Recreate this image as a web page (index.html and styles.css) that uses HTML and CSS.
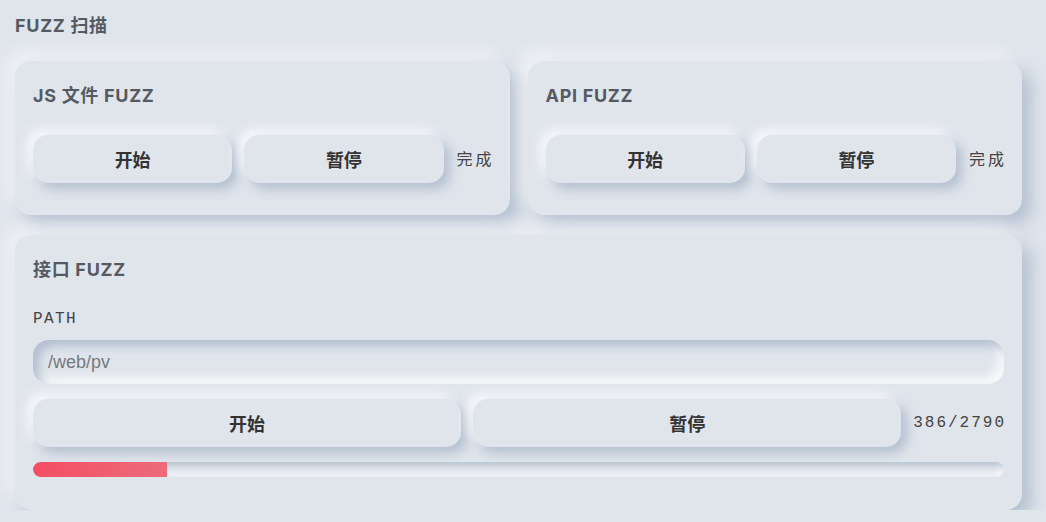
FILE: index.html
```html
<!DOCTYPE html>
<html lang="zh">
<head>
<meta charset="utf-8">
<title>FUZZ 扫描</title>
<link rel="stylesheet" href="styles.css">
</head>
<body>
<div class="page">
  <h2 class="page-title">FUZZ 扫描</h2>
  <div class="grid">
    <section class="card">
      <h3 class="card-title">JS 文件 FUZZ</h3>
      <div class="row">
        <button class="btn">开始</button>
        <button class="btn">暂停</button>
        <span class="status">完成</span>
      </div>
    </section>
    <section class="card">
      <h3 class="card-title">API FUZZ</h3>
      <div class="row">
        <button class="btn">开始</button>
        <button class="btn">暂停</button>
        <span class="status">完成</span>
      </div>
    </section>
    <section class="card wide">
      <h3 class="card-title">接口 FUZZ</h3>
      <label class="label">PATH</label>
      <input class="input" type="text" placeholder="/web/pv">
      <div class="row">
        <button class="btn">开始</button>
        <button class="btn">暂停</button>
        <span class="count">386/2790</span>
      </div>
      <div class="track"><div class="fill" style="width:13.8%"></div></div>
    </section>
  </div>
</div>
</body>
</html>
```

FILE: styles.css
```css
html, body {
  margin: 0;
  padding: 0;
  background: #e0e5ec;
}
body {
  font-family: Inter, "Noto Sans CJK SC", sans-serif;
  color: #333;
}
.page {
  padding: 15px 24px 0 15px;
}
.page-title {
  margin: 0 0 24px 0;
  font-size: 18px;
  line-height: 22px;
  font-weight: 700;
  color: #555a62;
  letter-spacing: 0.7px;
}
.grid {
  display: grid;
  grid-template-columns: 1fr 1fr;
  column-gap: 18px;
  row-gap: 20px;
}
.card {
  background: #e0e5ec;
  border-radius: 16px;
  padding: 24px 18px 32px 18px;
  display: flex;
  flex-direction: column;
  box-shadow: 9px 9px 18px rgba(163, 177, 198, 0.75), -9px -9px 18px rgba(255, 255, 255, 0.55);
}
.wide {
  grid-column: 1 / span 2;
  padding-bottom: 33px;
}
.card-title {
  margin: 0 0 28px 0;
  font-size: 18px;
  line-height: 22px;
  font-weight: 700;
  color: #555a62;
  letter-spacing: 0.7px;
}
.row {
  display: flex;
  align-items: center;
  gap: 12px;
}
.btn {
  flex: 1;
  height: 48px;
  border: none;
  border-radius: 15px;
  background: #e0e5ec;
  font-family: Inter, "Noto Sans CJK SC", sans-serif;
  font-size: 18px;
  font-weight: 700;
  color: #333;
  box-shadow: 6px 6px 12px rgba(163, 177, 198, 0.75), -6px -6px 12px rgba(255, 255, 255, 0.75);
  padding: 0;
}
.status {
  font-family: "Liberation Mono", "Noto Sans CJK SC", monospace;
  font-size: 16px;
  letter-spacing: 3px;
  color: #444;
  padding-left: 1px;
  margin-right: -3px;
  margin-top: -3px;
}
.count {
  font-family: "Liberation Mono", monospace;
  font-size: 16px;
  letter-spacing: 2px;
  color: #444;
  margin-right: -2px;
}
.label {
  font-family: "Liberation Mono", monospace;
  font-size: 16px;
  line-height: 20px;
  letter-spacing: 1.4px;
  color: #444;
  margin-bottom: 11px;
}
.input {
  height: 44px;
  border: none;
  outline: none;
  border-radius: 16px;
  background: #e0e5ec;
  padding: 0 15px;
  font-family: "Liberation Sans", Arial, sans-serif;
  font-size: 18px;
  color: #444;
  box-shadow: inset 6px 6px 10px rgba(163, 177, 198, 0.75), inset -6px -6px 10px rgba(255, 255, 255, 0.8);
  margin-bottom: 15px;
  box-sizing: border-box;
  width: 100%;
}
.input::placeholder {
  color: #75787d;
}
.track {
  margin-top: 15px;
  height: 15px;
  border-radius: 8px;
  background: #e0e5ec;
  box-shadow: inset 3px 3px 6px rgba(163, 177, 198, 0.75), inset -3px -3px 6px rgba(255, 255, 255, 0.8);
  overflow: hidden;
}
.fill {
  height: 100%;
  border-radius: 8px 0 0 8px;
  background: linear-gradient(90deg, #f44d63, #ec6b7b);
}
```
